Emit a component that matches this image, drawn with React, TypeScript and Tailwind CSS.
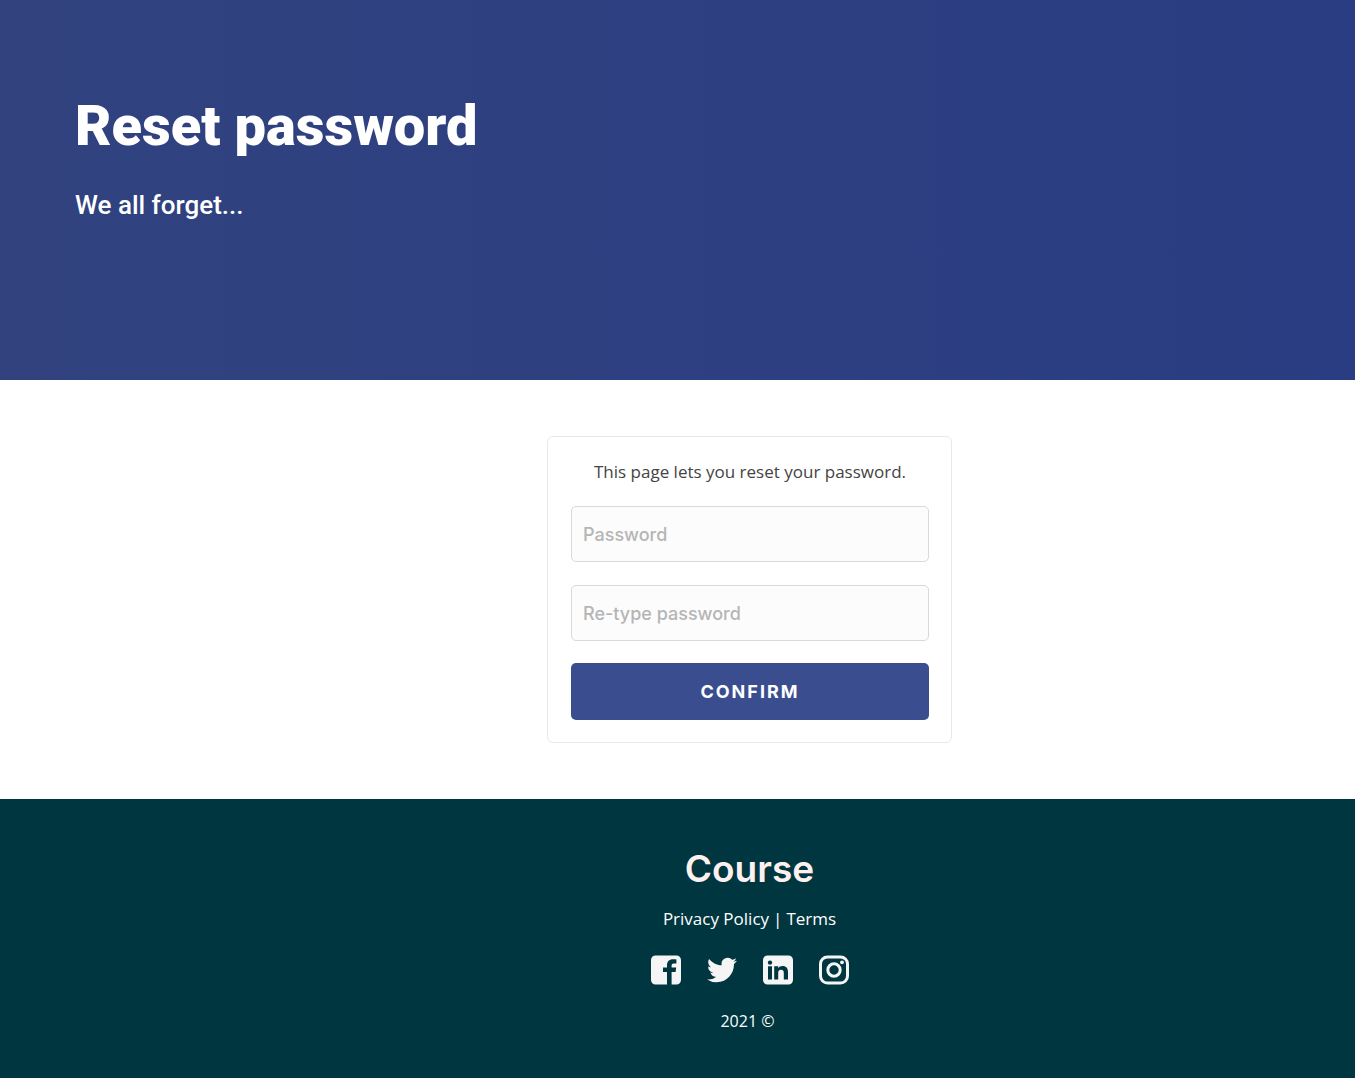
import React from "react";

function FacebookIcon() {
  return (
    <svg viewBox="0 0 30 30" className="size-[30px]" fill="currentColor" aria-hidden="true">
      <path d="M4.5 0.5H25.5A4.5 4.5 0 0 1 30 5V25A4.5 4.5 0 0 1 25.5 29.5H20.6V17H24.6L25.2 12.6H20.6V10.6C20.6 9.2 21.4 8.5 22.8 8.5H25.4V4.6C24.4 4.4 23.2 4.3 22 4.3C18.2 4.3 16 6.5 16 10.2V12.6H12V17H16V29.5H4.5A4.5 4.5 0 0 1 0 25V5A4.5 4.5 0 0 1 4.5 0.5Z" />
    </svg>
  );
}

function TwitterIcon() {
  return (
    <svg viewBox="0 0 24 24" className="size-[30px]" fill="currentColor" aria-hidden="true">
      <path d="M23.953 4.57a10 10 0 0 1-2.825.775 4.958 4.958 0 0 0 2.163-2.723c-.951.555-2.005.959-3.127 1.184a4.92 4.92 0 0 0-8.384 4.482C7.69 8.095 4.067 6.13 1.64 3.162a4.822 4.822 0 0 0-.666 2.475c0 1.71.87 3.213 2.188 4.096a4.904 4.904 0 0 1-2.228-.616v.06a4.923 4.923 0 0 0 3.946 4.827 4.996 4.996 0 0 1-2.212.085 4.936 4.936 0 0 0 4.604 3.417 9.867 9.867 0 0 1-6.102 2.105c-.39 0-.779-.023-1.17-.067a13.995 13.995 0 0 0 7.557 2.209c9.053 0 13.998-7.496 13.998-13.985 0-.21 0-.42-.015-.63A9.935 9.935 0 0 0 24 4.59z" />
    </svg>
  );
}

function LinkedinIcon() {
  return (
    <svg viewBox="0 0 30 30" className="size-[30px]" fill="currentColor" aria-hidden="true">
      <path
        fillRule="evenodd"
        d="M4.5 0.5H25.5A4.5 4.5 0 0 1 30 5V25A4.5 4.5 0 0 1 25.5 29.5H4.5A4.5 4.5 0 0 1 0 25V5A4.5 4.5 0 0 1 4.5 0.5ZM5 11.3V24.5H9V11.3ZM7 5.4A2.2 2.2 0 1 0 7 9.8A2.2 2.2 0 1 0 7 5.4ZM11.2 11.3V24.5H15.2V17.8C15.2 15.9 16.1 14.7 18 14.7C19.9 14.7 20.8 15.9 20.8 17.9V24.5H25V17C25 13.2 23.2 11 19.6 11C17.5 11 16 11.9 15.2 13.2V11.3Z"
      />
    </svg>
  );
}

function InstagramIcon() {
  return (
    <svg viewBox="0 0 30 30" className="size-[30px]" fill="none" stroke="currentColor" aria-hidden="true">
      <rect x="1.5" y="2" width="27" height="26" rx="7" strokeWidth="3" />
      <circle cx="15" cy="15" r="6.2" strokeWidth="3" />
      <circle cx="23" cy="7.3" r="1.9" fill="currentColor" stroke="none" />
    </svg>
  );
}

const socials = [
  { name: "Facebook", Icon: FacebookIcon },
  { name: "Twitter", Icon: TwitterIcon },
  { name: "LinkedIn", Icon: LinkedinIcon },
  { name: "Instagram", Icon: InstagramIcon },
];

const fieldClass =
  "block h-14 w-full rounded-[5px] border border-[#d9d9d9] bg-[#fcfcfc] px-[11px] font-['Inter',sans-serif] text-[18px] font-medium text-gray-800 placeholder:text-[#b5b5b5]";

export default function App() {
  return (
    <div className="flex min-h-screen flex-col bg-white font-['Open_Sans',sans-serif]">
      <header className="bg-linear-to-r from-[#31427f] to-[#2a3d82] px-[75px] pt-[90px] pb-[155px] font-['Roboto',sans-serif] text-white">
        <h1 className="text-[56px] leading-[72px] font-black">Reset password</h1>
        <p className="mt-6 text-[26px] leading-[39px] font-medium">We all forget...</p>
      </header>

      <main className="flex justify-center py-14 pl-36">
        <form
          className="flex w-full max-w-[405px] flex-col rounded-md border border-[#e8e8e8] pt-[22px] pr-[22px] pb-[22px] pl-[23px]"
          onSubmit={(e) => e.preventDefault()}
        >
          <p className="text-center text-[17px] leading-[26px] text-[#444]">
            This page lets you reset your password.
          </p>
          <input type="password" aria-label="Password" placeholder="Password" className={`${fieldClass} mt-[21px]`} />
          <input
            type="password"
            aria-label="Re-type password"
            placeholder="Re-type password"
            className={`${fieldClass} mt-[23px]`}
          />
          <button
            type="submit"
            className="mt-[22px] h-[57px] w-full rounded-[5px] bg-[#3a4d8f] font-['Inter',sans-serif] text-[18px] font-bold tracking-[2px] text-white"
          >
            CONFIRM
          </button>
        </form>
      </main>

      <footer className="flex grow flex-col items-center bg-[#00363f] pt-[46px] pb-11 pl-36 text-white">
        <div className="font-['Inter',sans-serif] text-[37px] leading-[48px] font-semibold text-[#fdf1f0]">Course</div>
        <nav className="mt-[13px] flex gap-1 text-[17px] leading-[26px]">
          <a href="#privacy">Privacy Policy</a>
          <span>|</span>
          <a href="#terms">Terms</a>
        </nav>
        <div className="mt-[23px] flex gap-[26px] text-[#f5f5f5]">
          {socials.map(({ name, Icon }) => (
            <a key={name} href={`#${name.toLowerCase()}`} aria-label={name}>
              <Icon />
            </a>
          ))}
        </div>
        <p className="mt-6 pr-1 text-[16px] leading-6">2021 ©</p>
      </footer>
    </div>
  );
}
